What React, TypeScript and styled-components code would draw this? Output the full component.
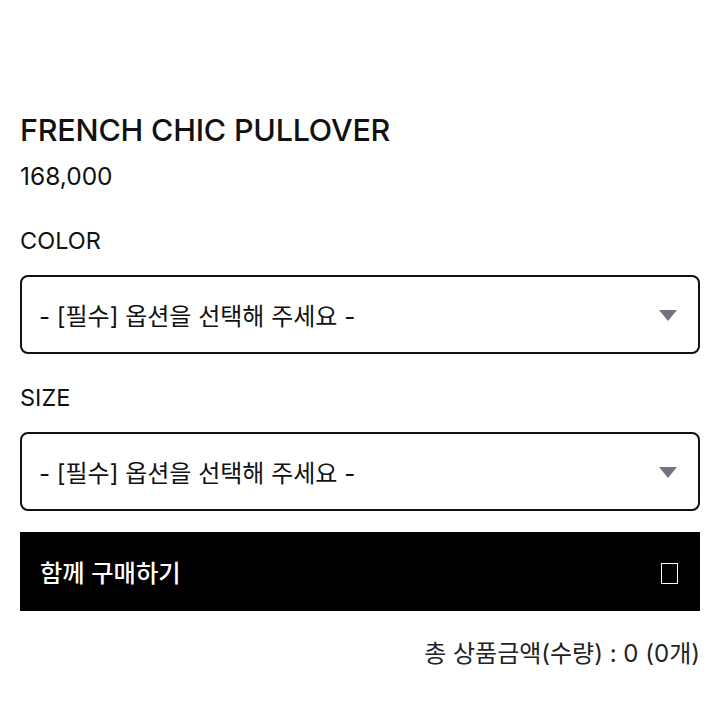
import React from "react";
import styled, { createGlobalStyle } from "styled-components";

const GlobalStyle = createGlobalStyle`
  body {
    margin: 0;
    background: #fff;
    font-family: Inter, "Noto Sans CJK KR", sans-serif;
    color: #111;
  }
  * { box-sizing: border-box; }
`;

const Page = styled.div`
  width: 720px;
  height: 720px;
  padding: 112px 20px 0 20px;
  display: flex;
  flex-direction: column;
`;

const Title = styled.h1`
  margin: 0;
  font-size: 30.5px;
  font-weight: 500;
  line-height: 36px;
  letter-spacing: -0.2px;
`;

const Price = styled.p`
  margin: 14px 0 0;
  font-size: 24.5px;
  line-height: 28px;
  font-weight: 400;
`;

const Label = styled.p<{ $top: number }>`
  margin: ${(p) => p.$top}px 0 0;
  font-size: 23.5px;
  line-height: 28px;
  font-weight: 400;
`;

const SelectBox = styled.div`
  margin-top: 20px;
  height: 79px;
  border: 2px solid #111;
  border-radius: 8px;
  display: flex;
  align-items: center;
  justify-content: space-between;
  padding: 0 20px 0 17px;
  font-size: 24px;
  color: #111;
`;

const BuyTogether = styled.div`
  margin-top: 21px;
  height: 79px;
  background: #000;
  color: #fff;
  display: flex;
  align-items: center;
  justify-content: space-between;
  padding: 0 22px 0 20px;
  font-size: 24.3px;
  font-weight: 500;
`;

const CheckSquare = styled.span`
  width: 17px;
  height: 21px;
  border: 1.5px solid #fff;
  margin-top: 4px;
`;

const Total = styled.p`
  margin: 28px 0 0;
  text-align: right;
  font-size: 24px;
  line-height: 30px;
  color: #222;
`;

const Arrow = () => (
  <svg width="20" height="14" viewBox="0 0 20 14">
    <polygon points="1,2 19,2 10,13" fill="#73727f" />
  </svg>
);

const OptionSelect = () => (
  <SelectBox>
    <span>- [필수] 옵션을 선택해 주세요 -</span>
    <Arrow />
  </SelectBox>
);

export default function App() {
  return (
    <>
      <GlobalStyle />
      <Page>
        <Title>FRENCH CHIC PULLOVER</Title>
        <Price>168,000</Price>
        <Label $top={37}>COLOR</Label>
        <OptionSelect />
        <Label $top={30}>SIZE</Label>
        <OptionSelect />
        <BuyTogether>
          <span>함께 구매하기</span>
          <CheckSquare />
        </BuyTogether>
        <Total>총 상품금액(수량) : 0 (0개)</Total>
      </Page>
    </>
  );
}
